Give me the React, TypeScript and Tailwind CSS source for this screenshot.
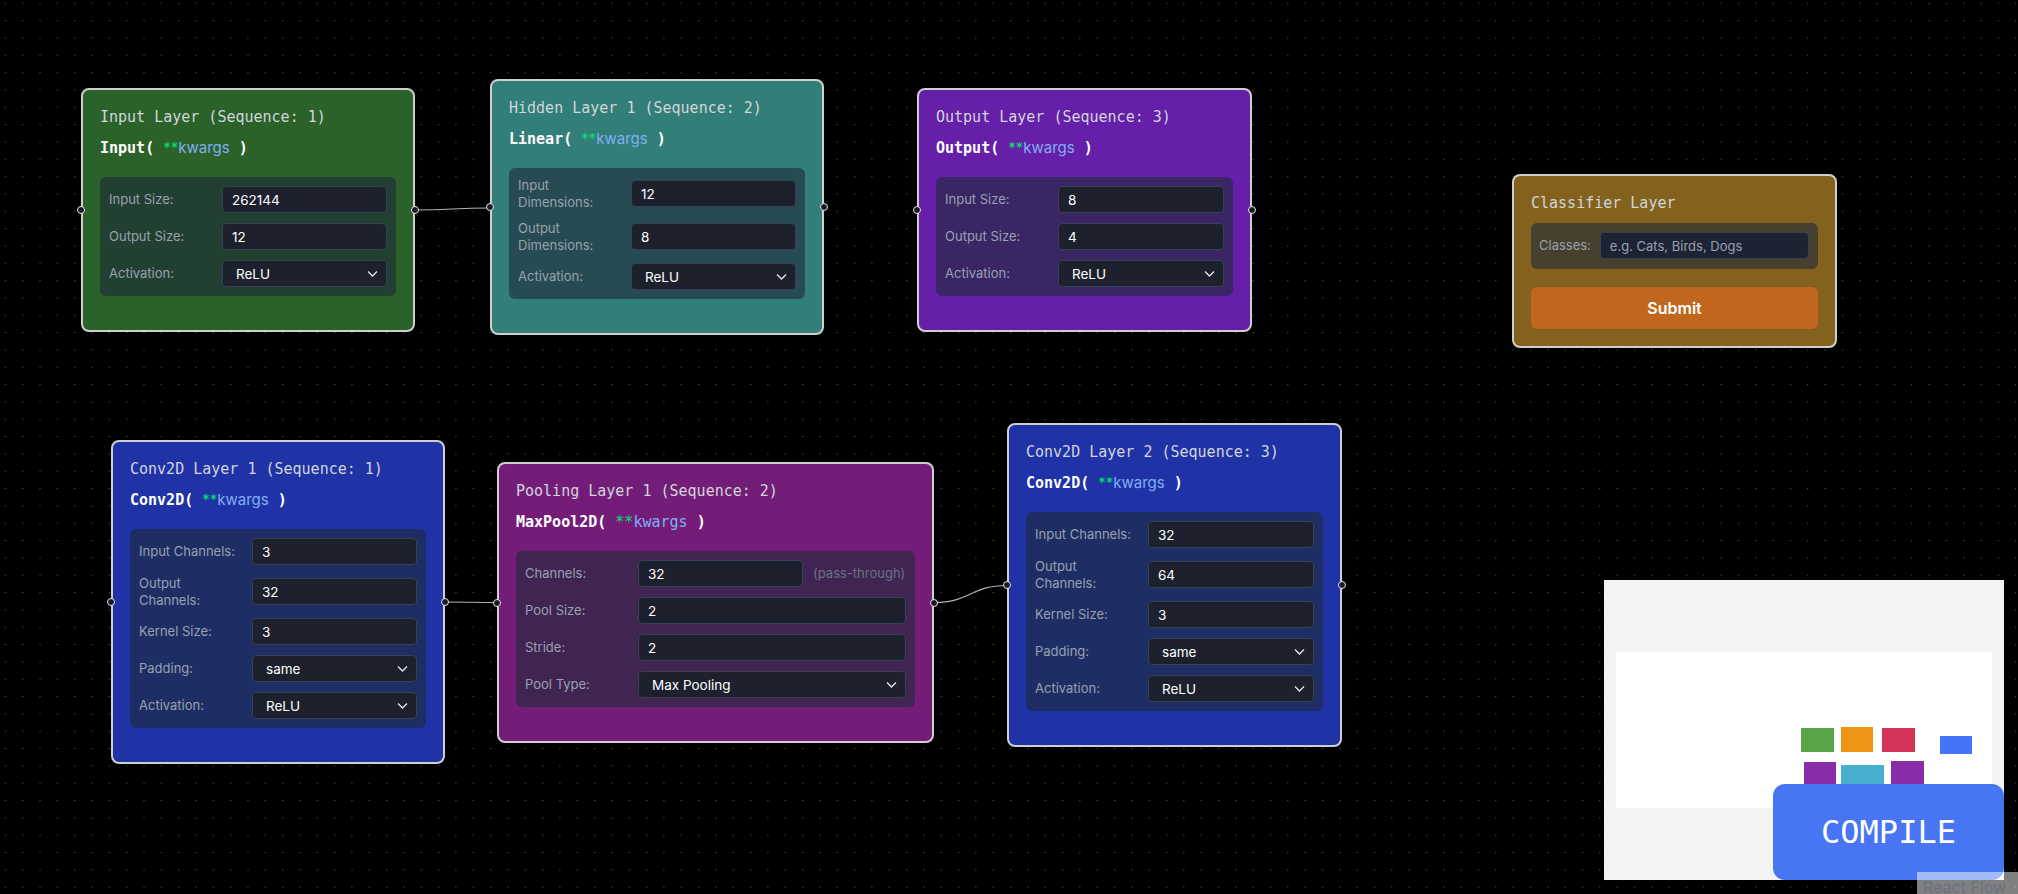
import type { ReactNode } from "react";

const sans = "font-[family-name:Inter,'Liberation_Sans',sans-serif]";
const mono = "font-[family-name:'DejaVu_Sans_Mono','Liberation_Mono',monospace]";

function Handle({ side }: { side: "left" | "right" }) {
  return (
    <span
      className={`absolute top-1/2 h-[8px] w-[8px] -translate-y-1/2 rounded-full border border-[#e5e5e5] bg-[#1a192b] ${
        side === "left" ? "-left-[6px]" : "-right-[6px]"
      }`}
    />
  );
}

function Row({ label, children }: { label: string; children: ReactNode }) {
  return (
    <div className="grid grid-cols-[113px_1fr] items-center">
      <span className="pr-[12px] text-[13px] leading-[16.5px] text-gray-400">{label}</span>
      {children}
    </div>
  );
}

function Field({ value, className = "" }: { value: string; className?: string }) {
  return (
    <input
      readOnly
      defaultValue={value}
      className={`h-[27px] w-full min-w-0 rounded-[4px] border border-gray-700 bg-[#1c212d] px-[9px] text-[13.5px] text-white outline-none ${className}`}
    />
  );
}

function Select({ value }: { value: string }) {
  return (
    <div className="relative h-[27px] rounded-[4px] border border-gray-700 bg-[#1c212d]">
      <select
        defaultValue={value}
        className="h-full w-full appearance-none bg-transparent pl-[13px] text-[13.5px] text-white outline-none"
      >
        <option>{value}</option>
      </select>
      <svg
        className="pointer-events-none absolute right-[8px] top-1/2 -translate-y-1/2"
        width="11"
        height="7"
        viewBox="0 0 11 7"
        fill="none"
      >
        <path d="M1 1l4.5 4.5L10 1" stroke="#e5e7eb" strokeWidth="1.3" />
      </svg>
    </div>
  );
}

function LayerNode({
  className,
  title,
  fn,
  monoArgs = false,
  children,
}: {
  className: string;
  title: string;
  fn: string;
  monoArgs?: boolean;
  children: ReactNode;
}) {
  return (
    <div
      className={`absolute rounded-[8px] border-2 border-[#cfcfcf] px-[17px] pb-[34px] pt-[16px] ${className}`}
    >
      <div className={`${mono} text-[15px] leading-[22px] text-gray-300`}>{title}</div>
      <div className={`${mono} mt-[9px] text-[15px] font-bold leading-[22px] text-white`}>
        {fn}({" "}
        <span className={`${monoArgs ? mono : sans} font-normal`}>
          <span className="text-green-400">**</span>
          <span className="text-[#7fb0f5]">kwargs</span>
        </span>{" "}
        )
      </div>
      <div className="mt-[18px] flex flex-col gap-[10px] rounded-[6px] bg-gray-800/60 p-[9px]">
        {children}
      </div>
      <Handle side="left" />
      <Handle side="right" />
    </div>
  );
}

export default function App() {
  return (
    <div className={`${sans} relative h-[894px] w-[2018px] overflow-hidden bg-black`}>
      {/* dotted canvas */}
      <svg className="absolute inset-0" width="2018" height="894">
        <defs>
          <pattern id="dots" x="4.8" y="2.8" width="17.33" height="17.33" patternUnits="userSpaceOnUse">
            <circle cx="0.6" cy="0.6" r="0.7" fill="#4f4f4f" />
          </pattern>
        </defs>
        <rect width="2018" height="894" fill="url(#dots)" />
        <g stroke="#b1b1b7" strokeWidth="1.2" fill="none">
          <path d="M415,210 C452.5,210 452.5,208 490,208" />
          <path d="M445,602 C471,602 471,602.5 497,602.5" />
          <path d="M934,602.5 C970.5,602.5 970.5,585.5 1007,585.5" />
        </g>
      </svg>

      <LayerNode className="left-[81px] top-[88px] w-[334px] bg-[#2a6229]" title="Input Layer (Sequence: 1)" fn="Input">
        <Row label="Input Size:"><Field value="262144" /></Row>
        <Row label="Output Size:"><Field value="12" /></Row>
        <Row label="Activation:"><Select value="ReLU" /></Row>
      </LayerNode>

      <LayerNode className="left-[490px] top-[79px] w-[334px] bg-[#327e78]" title="Hidden Layer 1 (Sequence: 2)" fn="Linear">
        <Row label="Input Dimensions:"><Field value="12" /></Row>
        <Row label="Output Dimensions:"><Field value="8" /></Row>
        <Row label="Activation:"><Select value="ReLU" /></Row>
      </LayerNode>

      <LayerNode className="left-[917px] top-[88px] w-[335px] bg-[#651fa9]" title="Output Layer (Sequence: 3)" fn="Output">
        <Row label="Input Size:"><Field value="8" /></Row>
        <Row label="Output Size:"><Field value="4" /></Row>
        <Row label="Activation:"><Select value="ReLU" /></Row>
      </LayerNode>

      {/* classifier */}
      <div className="absolute left-[1512px] top-[174px] w-[325px] rounded-[8px] border-2 border-[#cfcfcf] bg-[#84621e] px-[17px] pb-[17px] pt-[16px]">
        <div className={`${mono} text-[15px] leading-[22px] text-gray-300`}>Classifier Layer</div>
        <div className="mt-[9px] flex items-center gap-[9px] rounded-[6px] bg-gray-800/60 pb-[10px] pl-[8px] pr-[9px] pt-[9px]">
          <span className="text-[13px] text-gray-400">Classes:</span>
          <input
            placeholder="e.g. Cats, Birds, Dogs"
            className="h-[27px] w-0 min-w-0 flex-1 rounded-[4px] border border-gray-700 bg-[#1c2333] px-[9px] text-[13px] text-white outline-none placeholder:text-gray-400"
          />
        </div>
        <button className="mt-[18px] h-[42px] w-full rounded-[6px] bg-[#c1661e] text-[16px] font-semibold text-white">
          Submit
        </button>
      </div>

      <LayerNode className="left-[111px] top-[440px] w-[334px] bg-[#1f33a6]" title="Conv2D Layer 1 (Sequence: 1)" fn="Conv2D">
        <Row label="Input Channels:"><Field value="3" /></Row>
        <Row label="Output Channels:"><Field value="32" /></Row>
        <Row label="Kernel Size:"><Field value="3" /></Row>
        <Row label="Padding:"><Select value="same" /></Row>
        <Row label="Activation:"><Select value="ReLU" /></Row>
      </LayerNode>

      <LayerNode
        className="left-[497px] top-[462px] w-[437px] bg-[#741d78]"
        title="Pooling Layer 1 (Sequence: 2)"
        fn="MaxPool2D"
        monoArgs
      >
        <Row label="Channels:">
          <div className="flex items-center">
            <Field value="32" className="!w-[165px]" />
            <span className="ml-[10px] text-[13px] text-gray-500">(pass-through)</span>
          </div>
        </Row>
        <Row label="Pool Size:"><Field value="2" /></Row>
        <Row label="Stride:"><Field value="2" /></Row>
        <Row label="Pool Type:"><Select value="Max Pooling" /></Row>
      </LayerNode>

      <LayerNode className="left-[1007px] top-[423px] w-[335px] bg-[#1f33a6]" title="Conv2D Layer 2 (Sequence: 3)" fn="Conv2D">
        <Row label="Input Channels:"><Field value="32" /></Row>
        <Row label="Output Channels:"><Field value="64" /></Row>
        <Row label="Kernel Size:"><Field value="3" /></Row>
        <Row label="Padding:"><Select value="same" /></Row>
        <Row label="Activation:"><Select value="ReLU" /></Row>
      </LayerNode>

      {/* minimap */}
      <svg className="absolute left-[1604px] top-[580px]" width="400" height="300" viewBox="0 0 400 300">
        <rect width="400" height="300" fill="#f3f3f3" />
        <rect x="12" y="72" width="376" height="156" fill="#ffffff" />
        <rect x="197" y="148" width="33" height="24" fill="#5aa448" />
        <rect x="237" y="147" width="32" height="25" fill="#ef9515" />
        <rect x="278" y="148" width="33" height="24" fill="#d3345a" />
        <rect x="336" y="156" width="32" height="18" fill="#4673f8" />
        <rect x="200" y="182" width="32" height="30" fill="#8a2ca8" />
        <rect x="237" y="185" width="43" height="30" fill="#47afcd" />
        <rect x="287" y="181" width="33" height="30" fill="#8a2ca8" />
      </svg>

      <button
        className={`${mono} absolute left-[1773px] top-[784px] h-[96px] w-[231px] rounded-[12px] bg-[#4775f3] text-[32px] text-white`}
      >
        COMPILE
      </button>

      <div className="absolute left-[1917px] top-[872px] w-[130px] bg-white/50 px-[6px] pt-[4px] text-[16px] leading-[22px] text-gray-500">
        React Flow
      </div>
    </div>
  );
}
